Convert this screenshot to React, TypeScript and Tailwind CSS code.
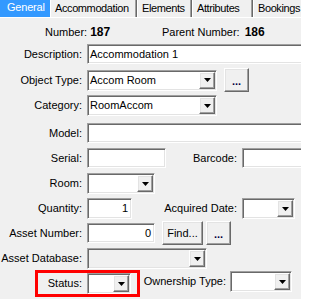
import React from "react";

const sunken =
  "border border-t-[#a0a0a0] border-l-[#a0a0a0] border-r-white border-b-white shadow-[inset_1px_1px_0_#696969,inset_-1px_-1px_0_#e3e3e3]";
const raised =
  "bg-[#f0f0f0] border border-t-white border-l-white border-r-[#696969] border-b-[#696969] shadow-[inset_-1px_-1px_0_#a0a0a0,inset_1px_1px_0_#e3e3e3]";

function Arrow() {
  return (
    <svg width="7" height="4" viewBox="0 0 7 4" className="block">
      <polygon points="0,0 7,0 3.5,4" fill="#000" />
    </svg>
  );
}

function Combo({
  w,
  text,
  disabled,
  className = "",
}: {
  w: string;
  text?: string;
  disabled?: boolean;
  className?: string;
}) {
  return (
    <div
      className={`${sunken} ${w} h-[21px] flex items-center shrink-0 ${
        disabled ? "bg-[#f0f0f0]" : "bg-white"
      } ${className}`}
    >
      <div className="flex-1 pl-[2px] whitespace-nowrap overflow-hidden leading-none">{text}</div>
      <div className={`${raised} w-[16px] h-[17px] mr-[1px] flex items-center justify-center`}>
        <Arrow />
      </div>
    </div>
  );
}

function Edit({
  w,
  text,
  right,
  className = "",
}: {
  w: string;
  text?: string;
  right?: boolean;
  className?: string;
}) {
  return (
    <div
      className={`${sunken} bg-white ${w} h-[20px] flex items-center shrink-0 whitespace-nowrap overflow-hidden ${
        right ? "justify-end pr-[3px]" : "pl-[2px]"
      } ${className}`}
    >
      {text}
    </div>
  );
}

function Btn({ w, children }: { w: string; children: React.ReactNode }) {
  return (
    <div className={`${raised} ${w} h-[24px] flex items-center justify-center shrink-0`}>
      {children}
    </div>
  );
}

function Label({ children }: { children: React.ReactNode }) {
  return <div className="w-[82px] text-right shrink-0 whitespace-nowrap">{children}</div>;
}

function Tab({
  children,
  w,
  active,
}: {
  children: React.ReactNode;
  w: string;
  active?: boolean;
}) {
  if (active)
    return (
      <div className={`${w} h-[17px] bg-[#3399ff] text-white pl-[7px] pt-[1px] shrink-0 tracking-[-0.2px]`}>
        {children}
      </div>
    );
  return (
    <div
      className={`${w} h-[17px] bg-[#f0f0f0] border-l border-l-white border-r border-r-[#696969] shadow-[inset_-1px_0_0_#a0a0a0] pl-[4px] pt-[2px] shrink-0 whitespace-nowrap overflow-hidden tracking-[-0.4px]`}
    >
      {children}
    </div>
  );
}

export default function App() {
  return (
    <div className="relative w-[301px] h-[299px] overflow-hidden bg-[#f0f0f0] text-[11px] leading-[13px] text-black font-['Liberation_Sans',Arial,sans-serif]">
      {/* Tabs */}
      <div className="flex h-[17px]">
        <Tab w="w-[50px]" active>
          General
        </Tab>
        <Tab w="w-[87px]">Accommodation</Tab>
        <Tab w="w-[55px]">Elements</Tab>
        <Tab w="w-[61px]">Attributes</Tab>
        <Tab w="w-[50px]">Bookings</Tab>
      </div>
      <div className="border-t border-t-white flex flex-col">
        {/* Number row */}
        <div className="mt-[4px] h-[20px] flex items-center pl-[45px]">
          <div className="w-[117px] flex items-center">
            <span>Number:</span>
            <span className="ml-[3px] font-bold text-[12px]">187</span>
          </div>
          <span>Parent Number:</span>
          <span className="ml-[5px] font-bold text-[12px]">186</span>
        </div>

        {/* Description */}
        <div className="mt-[2px] h-[20px] flex items-center">
          <Label>Description:</Label>
          <Edit w="w-[230px]" text="Accommodation 1" className="ml-[5px]" />
        </div>

        {/* Object Type */}
        <div className="mt-[4px] h-[24px] flex items-center">
          <Label>Object Type:</Label>
          <Combo w="w-[130px]" text="Accom Room" className="ml-[5px]" />
          <div className="ml-[7px]">
            <Btn w="w-[25px]">
              <span className="font-bold text-[#000040] mt-[2px]">...</span>
            </Btn>
          </div>
        </div>

        {/* Category */}
        <div className="mt-[3px] h-[21px] flex items-center">
          <Label>Category:</Label>
          <Combo w="w-[130px]" text="RoomAccom" className="ml-[5px]" />
        </div>

        {/* Model */}
        <div className="mt-[7px] h-[20px] flex items-center">
          <Label>Model:</Label>
          <Edit w="w-[230px]" className="ml-[5px]" />
        </div>

        {/* Serial / Barcode */}
        <div className="mt-[5px] h-[20px] flex items-center">
          <Label>Serial:</Label>
          <Edit w="w-[79px]" className="ml-[5px]" />
          <div className="w-[71px] text-right shrink-0">Barcode:</div>
          <Edit w="w-[70px]" className="ml-[5px]" />
        </div>

        {/* Room */}
        <div className="mt-[5px] h-[21px] flex items-center">
          <Label>Room:</Label>
          <Combo w="w-[68px]" className="ml-[5px]" />
        </div>

        {/* Quantity / Acquired Date */}
        <div className="mt-[4px] h-[21px] flex items-start">
          <Label>
            <div className="mt-[4px]">Quantity:</div>
          </Label>
          <Edit w="w-[45px]" text="1" right className="ml-[5px] h-[21px]" />
          <div className="w-[105px] text-right shrink-0 mt-[4px]">Acquired Date:</div>
          <Combo w="w-[53px]" className="ml-[5px] h-[20px]" />
        </div>

        {/* Asset Number */}
        <div className="mt-[2px] h-[24px] flex items-center">
          <Label>Asset Number:</Label>
          <Edit w="w-[68px]" text="0" right className="ml-[5px]" />
          <div className="ml-[7px]">
            <Btn w="w-[41px]">Find...</Btn>
          </div>
          <div className="ml-[3px]">
            <Btn w="w-[25px]">
              <span className="font-bold text-[#000040] mt-[2px]">...</span>
            </Btn>
          </div>
        </div>

        {/* Asset Database */}
        <div className="mt-[3px] h-[21px] flex items-center">
          <Label>Asset Database:</Label>
          <Combo w="w-[120px]" disabled className="ml-[5px]" />
        </div>

        {/* Status / Ownership Type */}
        <div className="mt-[2px] h-[22px] flex items-start">
          <Label>
            <div className="mt-[6px]">Status:</div>
          </Label>
          <Combo w="w-[44px]" className="ml-[5px] mt-[2px] h-[20px]" />
          <div className="w-[95px] text-right shrink-0 mt-[4px]">Ownership Type:</div>
          <Combo w="w-[62px]" className="ml-[4px] h-[20px]" />
        </div>
      </div>

      {/* Annotation highlight */}
      <div className="absolute left-[35px] top-[270px] w-[105px] h-[27px] border-[3px] border-[#ff0000] pointer-events-none" />
    </div>
  );
}
